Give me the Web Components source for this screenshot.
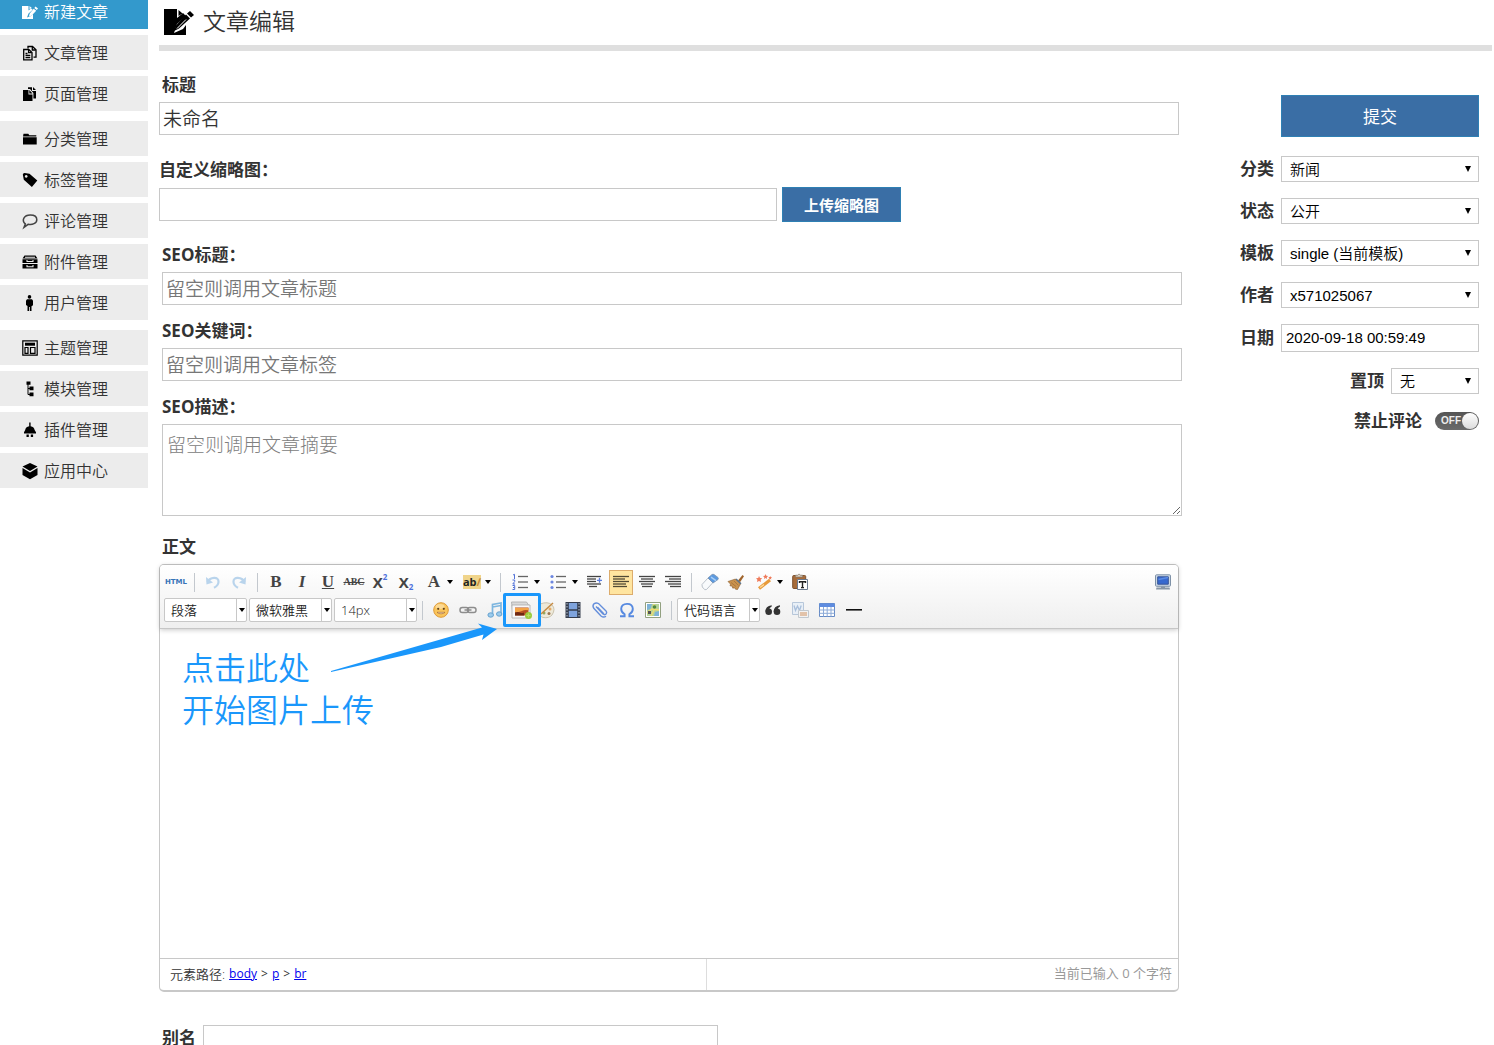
<!DOCTYPE html>
<html lang="zh-CN">
<head>
<meta charset="utf-8">
<title>文章编辑</title>
<style>
  html, body { margin: 0; height: 100%; }
  body {
    background: #fff; color: #333; overflow: hidden;
    font-family: "Open Sans", "Noto Sans CJK SC", sans-serif;
    --line: #c8c8c8; --blue: #3a6ea5; --mark: #1a97fb;
  }
</style>
</head>
<body>
<admin-shell>
  <side-nav slot="nav"></side-nav>
  <page-title>文章编辑</page-title>
  <article-form></article-form>
</admin-shell>

<script>
const define = (name, html, setup) => {
  const tpl = document.createElement('template');
  tpl.innerHTML = '<style>:host,*,::after{box-sizing:border-box}</style>' + html;
  customElements.define(name, class extends HTMLElement {
    constructor() {
      super();
      this.attachShadow({ mode: 'open' }).append(tpl.content.cloneNode(true));
    }
    connectedCallback() {
      if (setup && !this.ready) { this.ready = true; setup(this, this.shadowRoot); }
    }
  });
};

/* ---------- icons ---------- */
const lines = (rows, c = '#444') => rows.map(([x, y, w]) => `<path d="M${x} ${y}h${w}" stroke="${c}" stroke-width="1.3"/>`).join('');
const ICONS = {
  write: `<path fill="currentColor" d="M0 2h6.500v4.500L9 4.500l1.800 1.300L6.500 9.500 5 13.500l4-1.500 2-2v5H0z"/><path fill="currentColor" d="M7.500 2l2.300 2-2.300 1.200z"/><path fill="currentColor" d="M13.500 2.500L16 4.400l-1.200 1.500-2.500-2zM11.700 4.700l2.500 2-4.500 4.800-2.900 1.200.9-3.300z"/>`,
  docs: `<g fill="none" stroke="currentColor" stroke-width="1.3"><path d="M1.700 4.500h5l3.300 3v7.300H1.700z"/><path d="M6 3.500V1.500h4.500L14 4.700v7.500h-2.500"/><path d="M6.600 4.600v3h3M10.300 1.600V5h3.500M3.500 8.500h2M3.500 10.500h4.800M3.500 12.600h4.800"/></g>`,
  pages: `<path fill="currentColor" d="M1 4h5.500v4.500h4V15H1zM7.300 4l3.200 3.500H7.300z"/><path fill="currentColor" d="M6 3V1.200h4V5h4v7.500h-2.600V7L8 3zM11 1l3 3h-3z"/>`,
  folder: `<path fill="currentColor" d="M1.500 2.800h4.800l1 1.400h7V5.500H1zM1 6.200h13.700v7.300H1z"/>`,
  tag: `<path fill="currentColor" fill-rule="evenodd" d="M.8 2.500Q1 .9 2.600 1L7.500 1.700l7.800 6.900-5.400 6.300L1.800 7.800zM4.200 3a1.400 1.400 0 1 0 .01 0z"/>`,
  bubble: `<path fill="none" stroke="#444" stroke-width="1.500" d="M3.300 10.900C-.8 7.200 2 2 8.300 2c4 0 6.500 2 6.500 4.700 0 3.600-4.500 5.500-8.700 4.600L2 14.400z"/>`,
  drawer: `<path fill="currentColor" d="M2.500 1.500h11l2 3H.5zM.5 5.300h15V9H.5zM.5 10h15v4.500H.5z"/><path fill="none" stroke="#ececec" stroke-width="1.100" d="M5 6v1.500h6V6M5 11v1.700h6V11M3 3.300h10"/>`,
  user: `<circle cx="7.500" cy="1.900" r="1.800" fill="currentColor"/><path fill="currentColor" d="M5 4.200h5l1 1.500v4.500l-1.500 1V16H7.900v-4h-.8v4H5.500v-5L4 10V5.700z"/>`,
  theme: `<path fill="none" stroke="currentColor" stroke-width="1.200" d="M.8.800h14.400v14.400H.8zM3 7.500h3v5.800H3zM8.500 7.500H13v5.800H8.500z"/><path fill="currentColor" d="M3 2.700h10v3H3z"/>`,
  tree: `<path fill="currentColor" d="M4.500.5h4v3.200h-4zM7.500 5.500h4v3.700h-4zM7.500 11.500h4v3.700h-4z"/><path fill="none" stroke="currentColor" d="M6 3v10.500h2M6 7.500h2"/>`,
  plug: `<path fill="currentColor" d="M7.200.5h1.400v3.700C11 4.500 12.500 6 12.600 8l1.400 2.300V11.500H2v-1.200L3.200 8C3.300 6 4.800 4.500 7.200 4.200zM4.500 12.500h2.300V15H4.500zM8.800 12.500h2.300V15H8.800z"/>`,
  cube: `<path fill="currentColor" d="M8 0l7.500 3.600L8 8 .5 3.600zM.5 5.100L8 9.500l7.500-4.400v7L8 16.200.5 12.100z"/>`,
  undo: `<path fill="none" stroke="#b9d4ec" stroke-width="2.200" d="M2.500 8C5 3 14 2 13.500 8c-.2 2.700-2 4.500-4.500 5.800"/><path fill="#b9d4ec" d="M1 3l.5 7.500 6.500-2z"/>`,
  redo: `<path fill="none" stroke="#b9d4ec" stroke-width="2.200" d="M13.500 8C11 3 2 2 2.500 8c.2 2.700 2 4.500 4.500 5.800"/><path fill="#b9d4ec" d="M15 3l-.5 7.500-6.500-2z"/>`,
  ol: lines([[5, 2.500, 10], [5, 8, 10], [5, 13.500, 10]], '#666') + `<g fill="none" stroke="#5272d8"><path d="M0 1l1.500-.7V5M-.5 6h2.200v1.500L-.2 10H2M-.5 11.500h2.200v4H-.5M0 13.500h1.500"/></g>`,
  ul: lines([[5, 2.500, 10], [5, 8, 10], [5, 13.500, 10]], '#666') + `<g fill="#6c86e0"><circle cx="1" cy="2.500" r="1.600"/><circle cx="1" cy="8" r="1.600"/><circle cx="1" cy="13.500" r="1.600"/></g>`,
  indent: lines([[0, 2.500, 14], [0, 5, 9], [0, 7.500, 9], [0, 10, 14], [2, 12.500, 8]]) + `<path d="M10 6.300h5M12.500 3.800v5" stroke="#5b7ee0" stroke-width="1.300"/>`,
  left: lines([[0, 2.500, 16], [0, 5, 12], [0, 7.500, 16], [0, 10, 13], [0, 12.500, 14]], '#514a35'),
  center: lines([[0, 2.500, 16], [2, 5, 12], [0, 7.500, 16], [2, 10, 12], [3, 12.500, 10]]),
  right: lines([[0, 2.500, 16], [4, 5, 12], [0, 7.500, 16], [3, 10, 13], [5, 12.500, 11]]),
  eraser: `<path fill="#f8fafc" stroke="#aab3bd" stroke-width=".8" d="M0 10.500L6 4l5 4.500-6.500 7-1.700.2L.3 13z"/><path fill="#5c9ae0" stroke="#7892b0" stroke-width=".8" d="M6 4l4-3.500q1-.5 2 0L16 3.500q.7 1 0 2L11 9z"/><path d="M9 3.200l5 3.400" stroke="#a9cef5" stroke-width="1.500"/>`,
  broom: `<path fill="#a0642c" d="M10 6.500L14.500 1l1.500 1.200-4 6z"/><path fill="#c9924d" stroke="#86582a" stroke-width=".6" d="M0 7.500L7.500 5l5 5-3 5.500-2-.3-1-1.500-1.700.5L4 12l-2-.2.500-1.700z"/><path d="M3 8.500l5 4M6 7l4.500 4.500" stroke="#a5713a" stroke-width=".8"/><path d="M8 5l5 4.800" stroke="#5b738a" stroke-width="1.500"/>`,
  wand: `<path d="M3 14.500L14 6" stroke="#e79a3b" stroke-width="3.200"/><path d="M4 13.500l4-3" stroke="#ffd896" stroke-width="1.500"/><g fill="#ef7b5b"><path d="M3 2l1 2 2.200.3-1.600 1.500.4 2.200-2-1-2 1 .4-2.200L0 4.300 2.200 4zM9.500 0l.8 1.700 1.800.2-1.300 1.300.3 1.800-1.600-.9L8 5l.3-1.800L7 1.900l1.800-.2zM14.200 2l.5 1.100 1.300.2-1 .9.3 1.300-1.100-.6-1.200.6.300-1.300-1-.9 1.400-.2z"/></g>`,
  paste: `<rect x=".7" y="1.500" width="13" height="13" rx="1" fill="#a76c3b" stroke="#7d5330"/><path fill="#ddd5c8" stroke="#85786a" stroke-width=".7" d="M3.500 3V1.200h2L7 0l1.600 1.200h2V3z"/><path fill="#fff" stroke="#6b7a8f" d="M5.500 5.500h10v10h-10z"/><path d="M7.500 9V7.700h6V9M10.500 7.700v6M9 13.600h3" fill="none" stroke="#222" stroke-width="1.400"/>`,
  monitor: `<rect x=".5" y=".8" width="15" height="11.500" rx="1" fill="#cbd8e5" stroke="#7e91a7"/><path fill="#3769cf" stroke="#375597" d="M2.700 2.800h10.600v7.400H2.700z"/><path d="M3.500 5.500L13 3.500" stroke="#5b8be4" stroke-width="1.500"/><path fill="#8896a5" d="M6 12.500h4v1H6zM1.500 13.500h13l.5 2H1z"/>`,
  smile: `<circle cx="8" cy="8" r="7.300" fill="#fac55b" stroke="#de9a38"/><ellipse cx="7" cy="4.500" rx="4.500" ry="2.500" fill="#fff" opacity=".35"/><circle cx="5.200" cy="6.800" r="1.100" fill="#63441e"/><circle cx="10.800" cy="6.800" r="1.100" fill="#63441e"/><path d="M4 10.300h8q-1 1.500-4 1.500t-4-1.500z" fill="#fff" stroke="#a96525" stroke-width=".7"/>`,
  link: `<g fill="none" stroke="#8d8d8d" stroke-width="1.500"><rect x="0" y="5.500" width="8.500" height="5" rx="2.300"/><rect x="7.500" y="5.500" width="8.500" height="5" rx="2.300"/><path d="M4.500 8h7"/></g>`,
  music: `<path d="M5.500 12.500V2.500L14 1v10.500M5.500 5L14 3.500" fill="none" stroke="#7eb6df" stroke-width="1.700"/><ellipse cx="3.700" cy="13" rx="2.800" ry="2.200" fill="#9bcbed" stroke="#68a3cf"/><ellipse cx="12.200" cy="12" rx="2.700" ry="2.200" fill="#9bcbed" stroke="#68a3cf"/>`,
  image: `<path fill="#d9d9d9" stroke="#aaa" stroke-width=".8" d="M-1.500 0h15l2 3v10H0z"/><path fill="#f8f8f8" stroke="#aaa" stroke-width=".8" d="M-1 3h18v13H-1z"/><path fill="#b64e20" d="M2 5.500h13.500v8H2z"/><path fill="#f4a447" d="M2 6h13.500v2.300q-4-.8-6 .5T2 10.500z"/><path fill="#6e2812" d="M2 13.500v-3q3-1 5 0t4 0v3z"/><circle cx="15.500" cy="13.500" r="3.500" fill="#9bcc3d"/><path d="M15.500 11.500v4M13.500 13.500h4" stroke="#b9de62" stroke-width="1.100"/>`,
  palette: `<path fill="#eee9d9" stroke="#bfb69e" stroke-width=".8" d="M1 2Q9-1 13 3t0 10q-3 3.500-9 2.500L1 14z"/><circle cx="5" cy="11" r="1.500" fill="#92a75f"/><circle cx="10" cy="11.500" r="1.500" fill="#9d7550"/><circle cx="11" cy="7" r="1.500" fill="#e4ac69"/><path d="M2 12L14 1" stroke="#c48a43" stroke-width="1.500"/>`,
  film: `<path fill="#343c4c" d="M.5 0h15v16H.5z"/><path fill="#7ea3dc" d="M3.800 1h8.400v6.300H3.800zM3.800 8.700h8.400V15H3.800z"/><path d="M2 1v15M14 1v15" stroke="#b9c2d0" stroke-width="1" stroke-dasharray="1.500 1.500"/>`,
  clip: `<path d="M4 4.500l7 7.500q2 1.500 3.300-.3.900-1.500-.3-2.800L6.500 1.500Q4 .2 2 1.800.1 4 1.800 6.300L9 14q2.600 2 5 .2M5.500 5.200L12 12" fill="none" stroke="#648edb" stroke-width="1.400"/>`,
  omega: `<path d="M1 14.300h4.600v-2Q2 10 2.200 6.700 2.500 2 8 1.900t5.800 4.800Q14 10 10.400 12.300v2H15" fill="none" stroke="#5689e0" stroke-width="1.900"/>`,
  map: `<path fill="#fff" stroke="#92a080" d="M.5.500h15v15H.5z"/><path fill="#b5d398" d="M2 2h12v12H2z"/><path fill="#7eb3d6" d="M2 2h5L5.500 7 2 8zM9 14l1-4 4-1v5z"/><path d="M2 11l5-4 7 1M9 2v6l-3 6" fill="none" stroke="#eeda72" stroke-width="1.300"/><circle cx="9.500" cy="5" r="1.800" fill="#52873e"/><path fill="#555" d="M3 9h3v3H3z"/>`,
  quote: `<g fill="#333"><circle cx="3.700" cy="9.800" r="3.300"/><circle cx="12" cy="9.800" r="3.300"/><path d="M.4 9.700Q.3 4 6.700 3.200v1.200Q4 5.500 4.200 8zM8.700 9.700Q8.600 4 15 3.200v1.200Q12.300 5.500 12.500 8z"/></g>`,
  word: `<g opacity=".45"><path fill="#dceafa" stroke="#6e91bb" d="M.5.500h11v12H.5z"/><path d="M2 3.500l1.500 5 2-4.500 2 4.500 1.700-5" fill="none" stroke="#4e7fbd" stroke-width="1.300"/><path fill="#f2f4f6" stroke="#8996a3" d="M6.500 8.500h10v7h-10z"/><path fill="#cf8a52" d="M8 10h7v4H8z"/></g>`,
  table: `<path fill="#fff" stroke="#678bc5" d="M.5 1.500h15v13H.5z"/><path fill="#5e8ce0" d="M.5 1.500h15v3.500H.5z"/><path d="M.5 8h15M.5 11.300h15M4.500 5v9.500M8.200 5v9.500M12 5v9.500" stroke="#8dabd8"/>`,
  hr: `<path fill="#111" d="M0 7h16v1.600H0z"/>`
};

define('ui-icon', `
<style>
  :host { display: inline-flex; flex: none; width: var(--icon, 16px); height: var(--icon, 16px); }
  svg { display: block; width: 100%; height: 100%; overflow: visible; }
</style><svg viewBox="0 0 16 16" aria-hidden="true"></svg>`,
(el, root) => { root.querySelector('svg').innerHTML = ICONS[el.getAttribute('name')]; });

/* ---------- page frame ---------- */
define('admin-shell', `
<style>
  :host { display: flex; align-items: flex-start; gap: 11px; height: 100vh; overflow: hidden; }
  ::slotted(side-nav) { flex: 0 0 148px; }
  main { flex: 1; min-width: 0; padding-right: 2px; }
</style>
<slot name="nav"></slot><main><slot></slot></main>`);

define('nav-item', `
<style>
  :host { display: block; }
  a { display: flex; align-items: center; gap: 6px; height: 35px; padding-left: 22px;
      background: #ececec; color: #333; text-decoration: none;
      font: 350 16px/24px "Noto Sans CJK SC", sans-serif; }
  span { padding-bottom: 2px; }
  ui-icon { color: #000; }
  :host([current]) a { background: #3399cc; color: #fff; }
  :host([current]) ui-icon { color: #fff; }
</style>
<a href="#"><ui-icon></ui-icon><span><slot></slot></span></a>`,
(el, root) => {
  const icon = document.createElement('ui-icon');
  icon.setAttribute('name', el.getAttribute('icon'));
  root.querySelector('ui-icon').replaceWith(icon);
});

define('side-nav', `
<style>
  :host { display: block; margin-top: -6px; }
  nav, section { display: flex; flex-direction: column; }
  nav { gap: 10px; } section { gap: 6px; }
</style>
<nav>
  <section>
    <nav-item icon="write" current>新建文章</nav-item>
    <nav-item icon="docs">文章管理</nav-item>
    <nav-item icon="pages">页面管理</nav-item>
  </section>
  <section>
    <nav-item icon="folder">分类管理</nav-item>
    <nav-item icon="tag">标签管理</nav-item>
    <nav-item icon="bubble">评论管理</nav-item>
    <nav-item icon="drawer">附件管理</nav-item>
    <nav-item icon="user">用户管理</nav-item>
  </section>
  <section>
    <nav-item icon="theme">主题管理</nav-item>
    <nav-item icon="tree">模块管理</nav-item>
    <nav-item icon="plug">插件管理</nav-item>
    <nav-item icon="cube">应用中心</nav-item>
  </section>
</nav>`);

define('page-title', `
<style>
  :host { display: flex; align-items: center; gap: 8px; height: 51px; padding: 0 4px 2px; border-bottom: 6px solid #dfdfdf; color: #333; }
  svg { width: 32px; height: 28px; }
  h1 { margin: 0; padding-bottom: 4px; font: 350 23px/32px "Noto Sans CJK SC", sans-serif; }
</style>
<svg viewBox="0 0 32 28" aria-hidden="true">
  <path d="M1 1h13v9l6-5 3 3-9 8-3 9 9-4 3-4v10H1z"/>
  <path d="M15.500 2l4 3.500-4 2.500z"/>
  <path d="M27 3l4 4-3 2.500-4-4zM23 6.500l4 4-11 10-5 2.500 2-5.500z"/>
  <path d="M14 20.500l9-9" fill="none" stroke="#fff"/>
</svg>
<h1><slot></slot></h1>`);

/* ---------- form controls ---------- */
define('blue-button', `
<style>
  :host { display: block; }
  button { width: 100%; height: 100%; padding: 0; margin: 0; border: 1px solid #2f80b4; background: var(--blue); color: #fff;
    font: inherit; cursor: pointer; }
</style><button type="button"><slot></slot></button>`);

define('text-field', `
<style>
  :host { display: flex; flex-direction: column; gap: 5px; }
  label { font-size: 17px; line-height: 24px; font-weight: 700; }
  :host([indent]) label { padding-left: 3px; }
  .row { display: flex; align-items: center; gap: 5px; }
  input, textarea { flex: 1; min-width: 0; height: 33px; margin: 0; padding: 0 3px 2px; border: 1px solid var(--line); border-radius: 0;
    background: #fff; color: #333; font: 350 19px/24px "Noto Sans CJK SC", sans-serif; outline: 0; }
  textarea { height: 92px; padding: 7px 4px; resize: vertical; font-weight: 300; }
  ::placeholder { color: #777; opacity: 1; }
  textarea::placeholder { color: #808080; }
  :host([inline]) { flex-direction: row; align-items: center; gap: 7px; }
  :host([inline]) .row { flex: 1; }
  :host([inline]) label { padding-bottom: 8px; }
</style>
<label for="f"></label><div class="row"><slot></slot></div>`,
(el, root) => {
  root.querySelector('label').textContent = el.getAttribute('label');
  const f = document.createElement(el.hasAttribute('multiline') ? 'textarea' : 'input');
  f.id = 'f';
  f.placeholder = el.getAttribute('placeholder') || '';
  f.value = el.getAttribute('value') || '';
  root.querySelector('.row').prepend(f);
});

define('option-row', `
<style>
  :host { display: flex; justify-content: flex-end; align-items: center; gap: 7px; }
  label { font-size: 17px; line-height: 26px; font-weight: 700; }
  .box { display: grid; align-items: center; width: 198px; }
  :host([short]) .box { width: 88px; }
  select, input { grid-area: 1/1; width: 100%; height: 26px; margin: 0; padding: 1px 8px 0; border: 1px solid var(--line); border-radius: 0;
    appearance: none; background: #fff; color: #000; font: 350 15px/20px "Liberation Sans", "Noto Sans CJK SC", sans-serif; }
  input { height: 28px; padding: 0 4px 1px; }
  svg { grid-area: 1/1; justify-self: end; width: 6px; height: 6px; margin: 0 8px 1px 0; pointer-events: none; }
</style>
<label for="f"></label><div class="box"></div>`,
(el, root) => {
  root.querySelector('label').textContent = el.getAttribute('label');
  const v = el.getAttribute('value');
  root.querySelector('.box').innerHTML = el.hasAttribute('text')
    ? `<input id="f" value="${v}">`
    : `<select id="f"><option>${v}</option></select><svg viewBox="0 0 6 6" aria-hidden="true"><path d="M0 0h6L3 6z"/></svg>`;
});

define('toggle-row', `
<style>
  :host { display: flex; justify-content: flex-end; }
  label { display: flex; align-items: center; gap: 13px; font-size: 17px; line-height: 24px; font-weight: 700; }
  .pill { display: grid; align-items: center; width: 44px; height: 18px; }
  input { grid-area: 1/1; appearance: none; width: 44px; height: 18px; margin: 0; border-radius: 9px; background: linear-gradient(#555, #6a6a6a); }
  b { grid-area: 1/1; padding-left: 6px; color: #eee; font: 700 10px/18px "Liberation Sans", sans-serif; pointer-events: none; }
  i { grid-area: 1/1; justify-self: end; width: 16px; height: 16px; margin-right: 1px; border-radius: 50%; background: linear-gradient(#fff, #dcdcdc); pointer-events: none; }
</style>
<label><span><slot></slot></span><span class="pill"><input type="checkbox"><b>OFF</b><i></i></span></label>`);

/* ---------- rich text editor ---------- */
define('tool-button', `
<style>
  :host { display: flex; flex: 0 0 26px; justify-content: center; }
  :host([wide]) { flex-basis: 28px; }
  :host([split]) { flex-basis: 38px; }
  button { display: flex; align-items: center; justify-content: center; width: 24px; height: 25px; padding: 0; border: 1px solid transparent;
    background: none; color: #444; font: 700 17px/20px "Liberation Serif", serif; }
  :host([split]) button { width: 38px; padding-left: 6px; gap: 5px; justify-content: flex-start; }
  :host([pressed]) button { background: #ffe5a0; border-color: #dcac6c; }
  :host([marked]) { position: relative; z-index: 1; }
  :host([marked])::after { content: ""; position: absolute; inset: -5px -7px -4px -5px; border: 3px solid var(--mark); border-radius: 2px; pointer-events: none; }
  .caret { display: none; width: 6px; height: 4px; }
  .face { display: flex; justify-content: center; width: 16px; white-space: nowrap; }
  :host([split]) .caret { display: block; flex: none; }
</style>
<button type="button"><span class="face"><slot></slot></span><svg class="caret" viewBox="0 0 6 4" aria-hidden="true"><path d="M0 0h6L3 4z"/></svg></button>`,
(el, root) => {
  root.querySelector('button').setAttribute('aria-label', el.getAttribute('tip') || el.textContent);
  const name = el.getAttribute('icon');
  if (name) {
    const icon = document.createElement('ui-icon');
    icon.setAttribute('name', name);
    root.querySelector('slot').replaceWith(icon);
  }
});

define('tool-combo', `
<style>
  :host { display: grid; flex: 0 0 83px; align-items: center; }
  select { grid-area: 1/1; width: 100%; height: 24px; margin: 0; padding: 0 12px 0 6px; border: 1px solid var(--line); border-radius: 2px; appearance: none;
    background: #fff; color: #222; font: 350 13px/20px "Open Sans", "Noto Sans CJK SC", sans-serif; }
  span { grid-area: 1/1; justify-self: end; display: flex; align-items: center; justify-content: center; width: 11px; height: 24px; border-left: 1px solid var(--line); pointer-events: none; }
  svg { width: 6px; height: 4px; }
</style>
<select><option></option></select><span><svg viewBox="0 0 6 4" aria-hidden="true"><path d="M0 0h6L3 4z"/></svg></span>`,
(el, root) => {
  root.querySelector('option').textContent = el.getAttribute('value');
  root.querySelector('select').setAttribute('aria-label', el.getAttribute('tip'));
});

define('editor-toolbar', `
<style>
  :host { display: block; padding: 3px 2px 4px 3px; border-bottom: 1px solid #c6c6c6; border-radius: 4px 4px 0 0;
    background: linear-gradient(#fff, #efefef); box-shadow: 0 1px 5px rgba(0,0,0,.22); }
  .row { display: flex; align-items: center; height: 28px; }
  .row + .row { padding-left: 1px; }
  .combos { display: flex; gap: 2px; }
  hr { flex: 0 0 1px; height: 19px; margin: 0 5px; border: 0; background: #c3c8ce; }
  .end { margin-left: auto; }
  .html { color: #3774b8; font: 700 7px/10px "DejaVu Sans", sans-serif; }
  .it { font-style: italic; }
  .ul { text-decoration: underline; }
  .abc { font-size: 10px; text-decoration: line-through; }
  .x { display: flex; align-items: center; font: 700 15px/18px "Open Sans", sans-serif; }
  .x small { color: #4c6fdd; font-size: 8px; line-height: 8px; }
  .sup { align-self: flex-start; } .sub { align-self: flex-end; }
  .hl { color: #222; font: 700 11px/14px "Open Sans", sans-serif; background: #f0d48a; }
  .pen { color: #c58a3a; }
</style>
<div class="row">
  <tool-button><span class="html">HTML</span></tool-button><hr>
  <tool-button icon="undo" tip="撤销"></tool-button><tool-button icon="redo" tip="重做"></tool-button><hr>
  <tool-button>B</tool-button>
  <tool-button><span class="it">I</span></tool-button>
  <tool-button><span class="ul">U</span></tool-button>
  <tool-button><span class="abc">ABC</span></tool-button>
  <tool-button><span class="x">X<small class="sup">2</small></span></tool-button>
  <tool-button><span class="x">X<small class="sub">2</small></span></tool-button>
  <tool-button split>A</tool-button>
  <tool-button split><span class="hl">ab<span class="pen">∕</span></span></tool-button><hr>
  <tool-button split icon="ol" tip="有序列表"></tool-button>
  <tool-button split icon="ul" tip="无序列表"></tool-button>
  <tool-button icon="indent" tip="首行缩进"></tool-button>
  <tool-button icon="left" tip="居左对齐" pressed></tool-button>
  <tool-button icon="center" tip="居中对齐"></tool-button>
  <tool-button icon="right" tip="居右对齐"></tool-button><hr>
  <tool-button icon="eraser" tip="清除格式"></tool-button>
  <tool-button icon="broom" tip="格式刷"></tool-button>
  <tool-button split icon="wand" tip="自动排版"></tool-button>
  <tool-button icon="paste" tip="纯文本粘贴"></tool-button>
  <tool-button class="end" icon="monitor" tip="全屏"></tool-button>
</div>
<div class="row">
  <div class="combos">
    <tool-combo value="段落" tip="段落格式"></tool-combo>
    <tool-combo value="微软雅黑" tip="字体"></tool-combo>
    <tool-combo value="14px" tip="字号"></tool-combo>
  </div><hr>
  <tool-button icon="smile" tip="表情"></tool-button>
  <tool-button wide icon="link" tip="超链接"></tool-button>
  <tool-button icon="music" tip="音乐"></tool-button>
  <tool-button marked icon="image" tip="多图上传"></tool-button>
  <tool-button icon="palette" tip="涂鸦"></tool-button>
  <tool-button icon="film" tip="视频"></tool-button>
  <tool-button wide icon="clip" tip="附件"></tool-button>
  <tool-button icon="omega" tip="特殊字符"></tool-button>
  <tool-button icon="map" tip="地图"></tool-button><hr>
  <tool-combo value="代码语言" tip="代码语言"></tool-combo>
  <tool-button icon="quote" tip="引用"></tool-button>
  <tool-button wide icon="word" tip="图片转存"></tool-button>
  <tool-button icon="table" tip="插入表格"></tool-button>
  <tool-button wide icon="hr" tip="分隔线"></tool-button>
</div>`);

define('rich-editor', `
<style>
  :host { display: block; position: relative; border: 1px solid var(--line); border-bottom-width: 2px; border-radius: 5px; }
  .body { min-height: 329px; padding: 16px 22px; color: var(--mark); font: 350 32px/42px "Noto Sans CJK SC", sans-serif; outline: 0; }
  p { margin: 0; }
  footer { display: flex; height: 32px; border-top: 1px solid var(--line); font-size: 12px; line-height: 30px; }
  .path { flex: 545; display: flex; gap: 4px; padding-left: 10px; border-right: 1px solid #ddd; }
  .path span:first-child { font-size: 13px; font-weight: 350; }
  .count { flex: 473; padding-right: 6px; text-align: right; color: #999; font-size: 13px; line-height: 28px; }
  a { color: #00e; }
  .arrow { position: absolute; left: 171px; top: 58px; width: 166px; height: 49px; pointer-events: none; }
</style>
<editor-toolbar></editor-toolbar>
<div class="body" contenteditable="true" role="textbox" aria-label="正文"><p>点击此处</p><p>开始图片上传</p></div>
<footer>
  <div class="path"><span>元素路径:</span><a href="#">body</a><span>&gt;</span><a href="#">p</a><span>&gt;</span><a href="#">br</a></div>
  <div class="count">当前已输入 0 个字符</div>
</footer>
<svg class="arrow" viewBox="0 0 166 49" aria-hidden="true"><path fill="#1a97fb" d="M0 48L151 4.500 147 .5 166 6 151 17l1.500-5.500L110 24 0 49z"/></svg>`);

define('article-form', `
<style>
  :host { display: flex; align-items: flex-start; }
  .fields { flex: 1; min-width: 0; padding-top: 22px; }
  .main, .seo { display: flex; flex-direction: column; }
  .main { gap: 23px; padding-right: 3px; }
  .seo { gap: 14px; margin: 21px 0 19px 3px; }
  .thumb { width: 742px; }
  blue-button { flex: 0 0 119px; height: 35px; font: 700 15px/24px "Noto Sans CJK SC", sans-serif; }
  h2 { margin: 0 0 5px; padding-left: 3px; font-size: 17px; line-height: 24px; }
  rich-editor { margin-right: 3px; }
  .alias { width: 556px; margin: 33px 0 0 3px; }
  aside { flex: 0 0 310px; display: flex; flex-direction: column; gap: 16px; padding: 44px 13px 0 0; }
  aside blue-button { flex: none; align-self: flex-end; width: 198px; height: 42px; margin-bottom: 3px; font: 400 17px/24px "Noto Sans CJK SC", sans-serif; }
  toggle-row { margin-top: -1px; }
</style>
<div class="fields">
  <div class="main">
    <text-field indent label="标题" value="未命名"></text-field>
    <text-field class="thumb" label="自定义缩略图："><blue-button>上传缩略图</blue-button></text-field>
  </div>
  <div class="seo">
    <text-field label="SEO标题：" placeholder="留空则调用文章标题"></text-field>
    <text-field label="SEO关键词：" placeholder="留空则调用文章标签"></text-field>
    <text-field multiline label="SEO描述：" placeholder="留空则调用文章摘要"></text-field>
  </div>
  <h2>正文</h2>
  <rich-editor></rich-editor>
  <text-field class="alias" inline label="别名"></text-field>
</div>
<aside>
  <blue-button>提交</blue-button>
  <option-row label="分类" value="新闻"></option-row>
  <option-row label="状态" value="公开"></option-row>
  <option-row label="模板" value="single (当前模板)"></option-row>
  <option-row label="作者" value="x571025067"></option-row>
  <option-row label="日期" value="2020-09-18 00:59:49" text></option-row>
  <option-row label="置顶" value="无" short></option-row>
  <toggle-row>禁止评论</toggle-row>
</aside>`);
</script>
</body>
</html>
